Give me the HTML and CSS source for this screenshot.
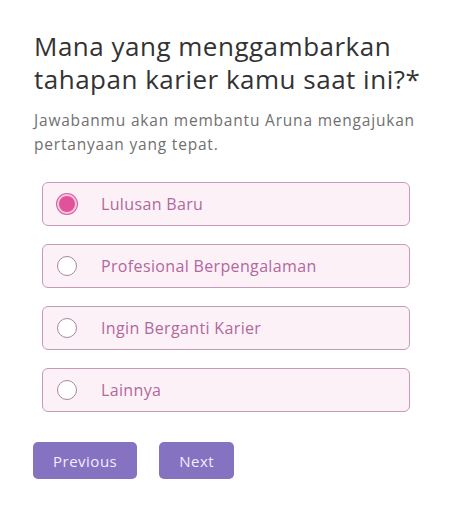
FILE: index.html
```html
<!DOCTYPE html>
<html lang="id">
<head>
    <meta charset="UTF-8">
    <meta name="viewport" content="width=device-width, initial-scale=1.0">
    <title>Tahapan Karier</title>
    <link rel="stylesheet" href="styles.css">
</head>
<body>
    <div class="container">
        <h1>Mana yang menggambarkan tahapan karier kamu saat ini?*</h1>
        <p class="hint">Jawabanmu akan membantu Aruna mengajukan pertanyaan yang tepat.</p>

        <div class="options">
            <label class="option selected">
                <span class="radio"></span>
                <span class="label">Lulusan Baru</span>
            </label>
            <label class="option">
                <span class="radio"></span>
                <span class="label">Profesional Berpengalaman</span>
            </label>
            <label class="option">
                <span class="radio"></span>
                <span class="label">Ingin Berganti Karier</span>
            </label>
            <label class="option">
                <span class="radio"></span>
                <span class="label">Lainnya</span>
            </label>
        </div>

        <div class="actions">
            <button class="btn">Previous</button>
            <button class="btn">Next</button>
        </div>
    </div>
</body>
</html>
```

FILE: styles.css
```css
body {
    margin: 0;
    padding: 0;
    background-color: #fff;
    font-family: "Open Sans", Arial, sans-serif;
    color: #333;
}

.container {
    padding: 30px 10px 0 34px;
}

h1 {
    margin: 0;
    max-width: 400px;
    font-size: 26px;
    font-weight: 400;
    line-height: 33px;
    color: #333;
    letter-spacing: 0.5px;
}

.hint {
    margin: 12px 0 0 0;
    font-size: 15.5px;
    line-height: 24px;
    color: #707070;
    letter-spacing: 0.8px;
}

.options {
    display: flex;
    flex-direction: column;
    gap: 18px;
    margin: 26px 30px 0 8px;
}

.option {
    display: flex;
    align-items: center;
    height: 44px;
    box-sizing: border-box;
    border: 1px solid #c99ab8;
    border-radius: 6px;
    background-color: #fdf1f8;
    padding-left: 14px;
}

.radio {
    width: 20px;
    height: 20px;
    box-sizing: border-box;
    border: 1px solid #a58a9c;
    border-radius: 50%;
    background-color: #fff;
}

.option.selected .radio {
    border: 2px solid #f6c6e0;
    background-color: #e0529a;
    box-shadow: 0 0 0 1px #d8609f;
}

.label {
    margin-left: 24px;
    font-size: 16px;
    color: #b1689c;
    letter-spacing: 0.35px;
}

.actions {
    display: flex;
    gap: 22px;
    margin-top: 30px;
    margin-left: -1px;
}

.btn {
    height: 37px;
    padding: 0 20px;
    border: none;
    border-radius: 5px;
    background-color: #8572c0;
    color: #f2ecff;
    font-family: "Open Sans", Arial, sans-serif;
    font-size: 15px;
    letter-spacing: 0.5px;
}
```
